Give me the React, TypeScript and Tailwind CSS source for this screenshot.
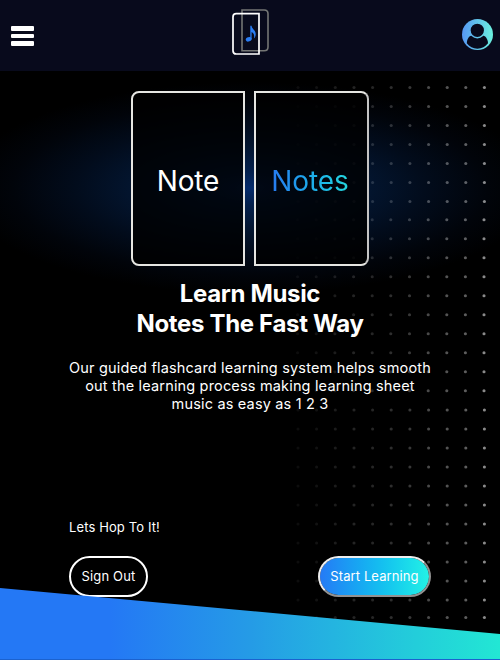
import React from "react";

const columns = [298, 316.6, 335.3, 354, 372.6, 391.2, 409.9, 428.6, 447.2, 465.8, 484.4];
const rows = [
  87.5, 106.5, 125.5, 144.5, 163.5, 182.5, 201.5, 219.7, 238.7, 257.7, 276.7, 295.7, 314.7, 333.7,
  352.7, 371.7, 390.8, 410, 429, 448, 467, 486, 505, 524, 543, 562, 581, 600, 617.5,
];
const strengths = [0.05, 0.07, 0.11, 0.14, 0.15, 0.18, 0.22, 0.29, 0.33, 0.37, 0.54];

function DotField() {
  return (
    <svg className="pointer-events-none absolute inset-0" width="500" height="660" aria-hidden="true">
      {rows.map((y) =>
        columns.map((x, i) => (
          <circle key={`${x}-${y}`} cx={y > 210 && y < 400 ? x - 0.4 : x} cy={y} r="1.55" fill="#fff" opacity={strengths[i]} />
        )),
      )}
    </svg>
  );
}

function Logo() {
  return (
    <svg width="40" height="48" viewBox="0 0 40 48" fill="none" aria-label="Note Notes">
      <path d="M11 2H33.2Q37 2 37 5.8V38.9Q37 42.7 33.2 42.7H11Z" stroke="#747674" strokeWidth="1.6" />
      <path d="M28 5.7H5.3Q2 5.7 2 9V42.7Q2 46 5.3 46H28Z" stroke="#fff" strokeWidth="1.7" />
      <ellipse cx="17.7" cy="31.3" rx="3" ry="2.2" transform="rotate(-20 17.7 31.3)" fill="#2a7df4" />
      <path d="M19.3 17.8h1.3c.3 3.5 4.1 4.3 4.1 8.4 0 1.8-.8 3.3-1.8 4.3.9-3.2-.1-5.2-2.3-6.4V31.3h-1.3Z" fill="#2a7df4" />
    </svg>
  );
}

function Avatar() {
  return (
    <svg width="31" height="31" viewBox="0 0 31 31" aria-label="Account">
      <defs>
        <linearGradient id="avatar" gradientUnits="userSpaceOnUse" x1="0" x2="31" y1="0" y2="0">
          <stop stopColor="#5798f5" />
          <stop offset="1" stopColor="#6bf1df" />
        </linearGradient>
      </defs>
      <circle cx="15.5" cy="15.5" r="15.5" fill="url(#avatar)" />
      <path d="M4.8 24.3C5 19.5 7.4 16.5 10.8 16.3H19.8C23.3 16.5 25.7 19.5 26 24.3C23.4 27.7 19.8 29.7 15.4 29.7S7.4 27.7 4.8 24.3Z" fill="#080a1c" />
      <circle cx="15.3" cy="11.3" r="7.4" fill="#080a1c" stroke="url(#avatar)" strokeWidth="1.5" />
    </svg>
  );
}

export default function App() {
  return (
    <div className="relative isolate flex h-[660px] w-[500px] flex-col overflow-hidden bg-black font-[Inter,sans-serif] text-white">
      <header className="flex h-[71px] shrink-0 items-start justify-between bg-[#080a1c] pl-[11px] pr-[7px]">
        <button className="mt-[26px] flex w-[28px] shrink-0 flex-col gap-[3px]" aria-label="Menu">
          <span className="h-[4.5px] w-[23px] rounded-[1px] bg-white" />
          <span className="h-[4.5px] w-[23px] rounded-[1px] bg-white" />
          <span className="h-[4.5px] w-[23px] rounded-[1px] bg-white" />
        </button>
        <div className="mt-2"><Logo /></div>
        <div className="mt-[19px]"><Avatar /></div>
      </header>

      <main className="flex grow flex-col items-center bg-[radial-gradient(ellipse_290px_106px_at_250px_117px,#052b6c_0%,#04204c_16%,#03152f_40%,#020c1c_60%,#01040a_82%,#000_100%)]">
        <DotField />
        <section className="relative mt-5 flex gap-[9px]">
          <div className="flex h-[175px] w-[114px] items-center justify-center rounded-l-[8px] border-2 border-[#e6e6e2] bg-black/80 pt-[5px] text-[28px] tracking-[-0.1px]">
            Note
          </div>
          <div className="flex h-[175px] w-[115px] items-center justify-center rounded-r-[8px] border-2 border-[#e6e6e2] border-r-[#c4c4c4] bg-black/80 pr-[3px] pt-[5px] text-[28px] tracking-[-0.1px]">
            <span className="bg-linear-to-r from-[#277af1] to-[#25d7df] bg-clip-text text-transparent">Notes</span>
          </div>
        </section>
        <h1 className="relative mt-[13px] text-center text-[24px] font-bold leading-[30px] tracking-[-0.33px]">
          Learn Music<br />Notes The Fast Way
        </h1>
        <p className="relative mt-[20px] whitespace-nowrap text-center text-[14.5px] leading-[18.2px] tracking-[0.17px]">
          Our guided flashcard learning system helps smooth<br />
          out the learning process making learning sheet<br />
          music as easy as 1 2 3
        </p>
        <div className="relative mt-[104px] w-[362px]">
          <p className="text-[13px] leading-[18px] tracking-[0.12px]">Lets Hop To It!</p>
          <div className="mt-[20px] flex justify-between">
            <button className="h-[41px] w-[79px] whitespace-nowrap rounded-full border-2 border-white bg-black pt-[2px] text-[13px] tracking-[0.15px]">
              Sign Out
            </button>
            <button className="h-[41px] w-[113px] whitespace-nowrap rounded-full border-2 border-[#eeeeee] border-r-[#929292] border-b-[#929292] bg-linear-to-r from-[#257af5] to-[#24f1e5] bg-clip-padding px-0 pt-[2px] text-[13px] tracking-[0.1px]">
              Start Learning
            </button>
          </div>
        </div>
      </main>
      <div className="absolute inset-x-0 bottom-0 h-[72px] border-b border-[#1b62cf] bg-[linear-gradient(90deg,#2478f5_0%,#2478f5_22%,#259be6_50%,#22e7d4_100%)] [clip-path:polygon(0_0,100%_46px,100%_100%,0_100%)]" />
    </div>
  );
}
